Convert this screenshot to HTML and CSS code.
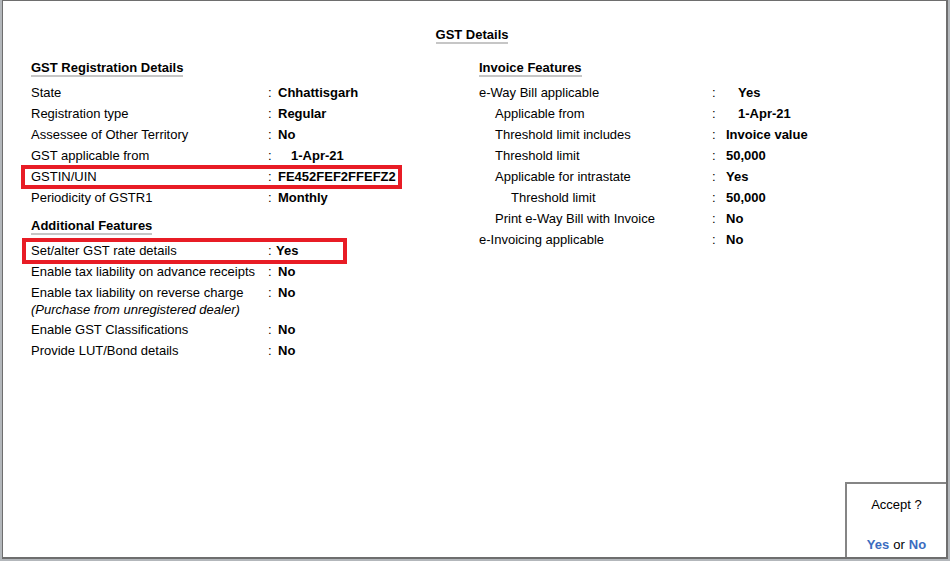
FILE: index.html
```html
<!DOCTYPE html>
<html lang="en">
<head>
<meta charset="utf-8">
<title>GST Details</title>
<link rel="stylesheet" href="styles.css">
</head>
<body>
<div class="window">
  <div class="content">
    <div class="title"><span>GST Details</span></div>
    <div class="cols">
      <div class="col">
        <div class="sec-head">GST Registration Details</div>
        <div class="row"><span class="lbl">State</span><span class="colon">:</span><span class="val">Chhattisgarh</span></div>
        <div class="row"><span class="lbl">Registration type</span><span class="colon">:</span><span class="val">Regular</span></div>
        <div class="row"><span class="lbl">Assessee of Other Territory</span><span class="colon">:</span><span class="val">No</span></div>
        <div class="row"><span class="lbl">GST applicable from</span><span class="colon">:</span><span class="val indent">1-Apr-21</span></div>
        <div class="row hl hl-gstin"><span class="lbl">GSTIN/UIN</span><span class="colon">:</span><span class="val">FE452FEF2FFEFZ2</span></div>
        <div class="row"><span class="lbl">Periodicity of GSTR1</span><span class="colon">:</span><span class="val">Monthly</span></div>

        <div class="sec-head sec-gap">Additional Features</div>
        <div class="row hl hl-rate"><span class="lbl">Set/alter GST rate details</span><span class="colon">:</span><span class="val tight">Yes</span></div>
        <div class="row"><span class="lbl">Enable tax liability on advance receipts</span><span class="colon">:</span><span class="val">No</span></div>
        <div class="row"><span class="lbl">Enable tax liability on reverse charge</span><span class="colon">:</span><span class="val">No</span></div>
        <div class="note">(Purchase from unregistered dealer)</div>
        <div class="row"><span class="lbl">Enable GST Classifications</span><span class="colon">:</span><span class="val">No</span></div>
        <div class="row"><span class="lbl">Provide LUT/Bond details</span><span class="colon">:</span><span class="val">No</span></div>
      </div>
      <div class="col col-right">
        <div class="sec-head">Invoice Features</div>
        <div class="row"><span class="lbl">e-Way Bill applicable</span><span class="colon">:</span><span class="val indent">Yes</span></div>
        <div class="row"><span class="lbl lv1">Applicable from</span><span class="colon">:</span><span class="val indent">1-Apr-21</span></div>
        <div class="row"><span class="lbl lv1">Threshold limit includes</span><span class="colon">:</span><span class="val">Invoice value</span></div>
        <div class="row"><span class="lbl lv1">Threshold limit</span><span class="colon">:</span><span class="val">50,000</span></div>
        <div class="row"><span class="lbl lv1">Applicable for intrastate</span><span class="colon">:</span><span class="val">Yes</span></div>
        <div class="row"><span class="lbl lv2">Threshold limit</span><span class="colon">:</span><span class="val">50,000</span></div>
        <div class="row"><span class="lbl lv1">Print e-Way Bill with Invoice</span><span class="colon">:</span><span class="val">No</span></div>
        <div class="row"><span class="lbl">e-Invoicing applicable</span><span class="colon">:</span><span class="val">No</span></div>
      </div>
    </div>
  </div>
  <div class="accept">
    <div class="accept-q">Accept ?</div>
    <div class="accept-opts"><span class="opt">Yes</span><span class="or">or</span><span class="opt">No</span></div>
  </div>
</div>
</body>
</html>
```

FILE: styles.css
```css
*, *::before, *::after { box-sizing: border-box; }

html, body {
  margin: 0;
  padding: 0;
}

body {
  background: #b3b7bb;
  font-family: "Liberation Sans", Arial, sans-serif;
  font-size: 13px;
  color: #000;
  width: 950px;
  height: 561px;
  overflow: hidden;
}

.window {
  margin: 0 2px 2px 2px;
  height: 559px;
  background: #fff;
  border-top: 1px solid #6e6e6e;
  border-left: 1px solid #6e6e6e;
  border-right: 2px solid #6e6e6e;
  border-bottom: 2px solid #6e6e6e;
  display: flex;
  flex-direction: column;
}

.content {
  padding: 27px 33px 0 28px;
  flex: 1;
}

.title {
  display: flex;
  justify-content: center;
}

.title span,
.sec-head {
  font-weight: bold;
  line-height: 14px;
  border-bottom: 2px solid #c6c6c6;
}

.cols {
  margin-top: 17px;
  display: grid;
  grid-template-columns: 448px 1fr;
}

.sec-head {
  width: fit-content;
  margin-bottom: 5px;
}

.sec-gap {
  margin-top: 11px;
}

.row {
  display: grid;
  grid-template-columns: 236px 11px auto;
  line-height: 21px;
  white-space: nowrap;
}

.col-right .row {
  grid-template-columns: 232px 15px auto;
}

.colon {
  padding-left: 1px;
}

.val {
  font-weight: bold;
}

.val.indent {
  padding-left: 13px;
}

.col-right .val.indent {
  padding-left: 12px;
}

.val.tight {
  margin-left: -2px;
}

.lv1 { padding-left: 16px; }
.lv2 { padding-left: 32px; }

.note {
  font-style: italic;
  line-height: 18px;
  margin-top: -2px;
}

.hl {
  position: relative;
}

.hl::after {
  content: "";
  position: absolute;
  border: 4px solid #e81c25;
  pointer-events: none;
}

.hl-gstin::after {
  left: -10px;
  top: -1px;
  width: 381px;
  height: 24px;
}

.hl-rate::after {
  left: -9px;
  top: -2px;
  width: 325px;
  height: 26px;
}

.accept {
  align-self: flex-end;
  width: 101px;
  height: 75px;
  border-top: 2px solid #858585;
  border-left: 2px solid #858585;
  text-align: center;
  padding-top: 13px;
}

.accept-q {
  line-height: 16px;
}

.accept-opts {
  margin-top: 24px;
  line-height: 16px;
}

.opt {
  color: #3b6cc0;
  font-weight: bold;
}

.or {
  padding: 0 4px;
}
```
